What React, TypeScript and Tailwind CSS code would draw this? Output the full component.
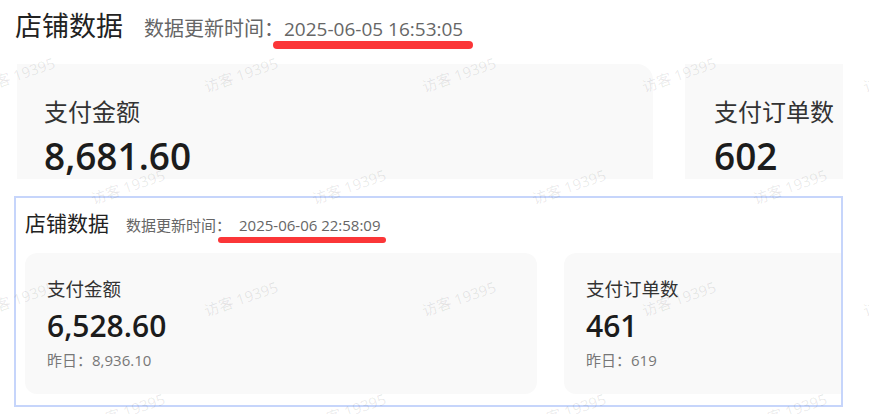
const FONT = "font-['Open_Sans','Noto_Sans_CJK_SC',sans-serif]"

type Metric = { label: string; value: string; yesterday?: string }

const topMetrics: Metric[] = [
  { label: '支付金额', value: '8,681.60' },
  { label: '支付订单数', value: '602' },
]

const bottomMetrics: Metric[] = [
  { label: '支付金额', value: '6,528.60', yesterday: '8,936.10' },
  { label: '支付订单数', value: '461', yesterday: '619' },
]

// faint repeating "访客 19395" watermark, staggered rows
const marks: { x: number; y: number }[] = []
;[75, 187, 299, 411].forEach((y, row) => {
  const xs = row % 2 === 0 ? [18, 241, 459, 679, 900] : [128, 349, 569, 790]
  xs.forEach((x) => marks.push({ x, y }))
})

function Watermarks() {
  return (
    <div className="pointer-events-none absolute inset-0 overflow-hidden">
      {marks.map((m, i) => (
        <span
          key={i}
          className="absolute whitespace-nowrap text-[15px] leading-none text-black/[0.09] rotate-[-19deg] -translate-x-1/2 -translate-y-1/2"
          style={{ left: m.x, top: m.y }}
        >
          访客 19395
        </span>
      ))}
    </div>
  )
}

function TopSection() {
  return (
    <section className="h-[179px] w-[843px] overflow-hidden">
      <header className="flex items-baseline pl-[15px] pt-[12px] leading-none">
        <h1 className="text-[27px] text-[#222]">店铺数据</h1>
        <span className="ml-[21px] text-[20px] text-[#666]">数据更新时间：</span>
        <span className="relative text-[19px] text-[#666]">
          2025-06-05 16:53:05
          <span className="absolute left-[-11px] right-[-10px] top-[21px] h-[8px] rounded-full bg-[#fb3638]" />
        </span>
      </header>
      <div className="mt-[25px] flex gap-[32px] pl-[17px]">
        {topMetrics.map((m, i) => (
          <div
            key={m.label}
            className={
              i === 0
                ? 'h-[160px] w-[636px] shrink-0 rounded-tr-[16px] bg-[#f9f9f9] px-[27px] pt-[36px] leading-none'
                : 'h-[160px] w-[636px] shrink-0 bg-[#f9f9f9] px-[29px] pt-[36px] leading-none'
            }
          >
            <div className="text-[24px] text-[#333]">{m.label}</div>
            <div className="mt-[13px] text-[37px] font-semibold text-[#1c1c1c]">{m.value}</div>
          </div>
        ))}
      </div>
    </section>
  )
}

function BottomSection() {
  return (
    <section className="ml-[14px] mt-[17px] h-[211px] w-[829px] overflow-hidden border-2 border-[#c6d5fb] px-[9px]">
      <header className="flex items-baseline pt-[15px] leading-none">
        <h2 className="text-[21px] text-[#222]">店铺数据</h2>
        <span className="ml-[17px] text-[15px] text-[#666]">数据更新时间：</span>
        <span className="relative ml-[8px] text-[15px] text-[#666]">
          2025-06-06 22:58:09
          <span className="absolute left-[-21px] right-[-5px] top-[19px] h-[6px] rounded-full bg-[#fb3638]" />
        </span>
      </header>
      <div className="mt-[19px] flex gap-[27px]">
        {bottomMetrics.map((m) => (
          <div
            key={m.label}
            className="h-[141px] w-[512px] shrink-0 rounded-[12px] bg-[#f9f9f9] px-[22px] pt-[27px] leading-none"
          >
            <div className="text-[18.5px] text-[#333]">{m.label}</div>
            <div className="mt-[12px] text-[30px] font-semibold text-[#1c1c1c]">{m.value}</div>
            <div className="mt-[12px] text-[15px] text-[#777]">昨日：{m.yesterday}</div>
          </div>
        ))}
      </div>
    </section>
  )
}

export default function App() {
  return (
    <div className={`relative h-[414px] w-[869px] overflow-hidden bg-white ${FONT}`}>
      <TopSection />
      <BottomSection />
      <Watermarks />
    </div>
  )
}
